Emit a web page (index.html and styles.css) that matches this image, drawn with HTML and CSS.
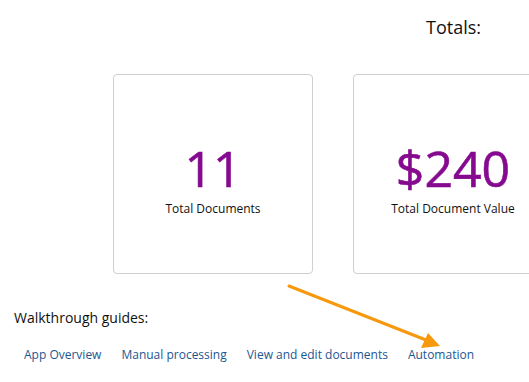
FILE: index.html
```html
<!DOCTYPE html>
<html lang="en">

<head>
    <meta charset="UTF-8">
    <title>Totals</title>
    <link rel="stylesheet" href="styles.css">
</head>

<body>
    <div class="page">
        <h2 class="totals-title">Totals:</h2>
        <div class="cards">
            <div class="card">
                <div class="card-value">11</div>
                <div class="card-label">Total Documents</div>
            </div>
            <div class="card">
                <div class="card-value">$240</div>
                <div class="card-label">Total Document Value</div>
            </div>
        </div>
        <h3 class="guides-title">Walkthrough guides:</h3>
        <div class="guides">
            <a href="#">App Overview</a>
            <a href="#">Manual processing</a>
            <a href="#">View and edit documents</a>
            <a href="#">Automation</a>
        </div>
        <!-- pointer to the Automation guide -->
        <svg class="arrow" width="529" height="382" viewBox="0 0 529 382">
            <line x1="289" y1="286" x2="426" y2="340" stroke="#f7990f" stroke-width="3" stroke-linecap="round" />
            <polygon points="440,346 421,348 428,333" fill="#f7990f" />
        </svg>
    </div>
</body>

</html>
```

FILE: styles.css
```css
body {
    margin: 0;
    font-family: "Open Sans", "Liberation Sans", sans-serif;
    background-color: #ffffff;
    color: #111;
    overflow: hidden;
}

.page {
    position: relative;
    width: 529px;
    height: 382px;
    overflow: hidden;
}

.totals-title {
    margin: 0;
    padding: 15px 48px 0 0;
    text-align: right;
    font-size: 18px;
    font-weight: normal;
    line-height: 25px;
}

.cards {
    display: flex;
    gap: 40px;
    margin-top: 34px;
    padding-left: 113px;
}

.card {
    flex: 0 0 auto;
    box-sizing: border-box;
    width: 200px;
    height: 200px;
    padding-top: 67px;
    border: 1px solid #cfcfcf;
    border-radius: 4px;
    display: flex;
    flex-direction: column;
    align-items: center;
}

.card-value {
    font-size: 50px;
    font-weight: normal;
    line-height: 52px;
    color: #850a8f;
    -webkit-text-stroke: 0.6px #850a8f;
}

.card-label {
    margin-top: 8px;
    font-size: 12px;
    line-height: 14px;
}

.guides-title {
    margin: 34px 0 0 14px;
    font-size: 14px;
    font-weight: normal;
    line-height: 20px;
}

.guides {
    display: flex;
    gap: 20px;
    margin-top: 19px;
    padding-left: 24px;
}

.guides a {
    font-size: 12px;
    line-height: 16px;
    color: #1d5690;
    text-decoration: none;
}

.arrow {
    position: absolute;
    left: 0;
    top: 0;
    pointer-events: none;
}
```
